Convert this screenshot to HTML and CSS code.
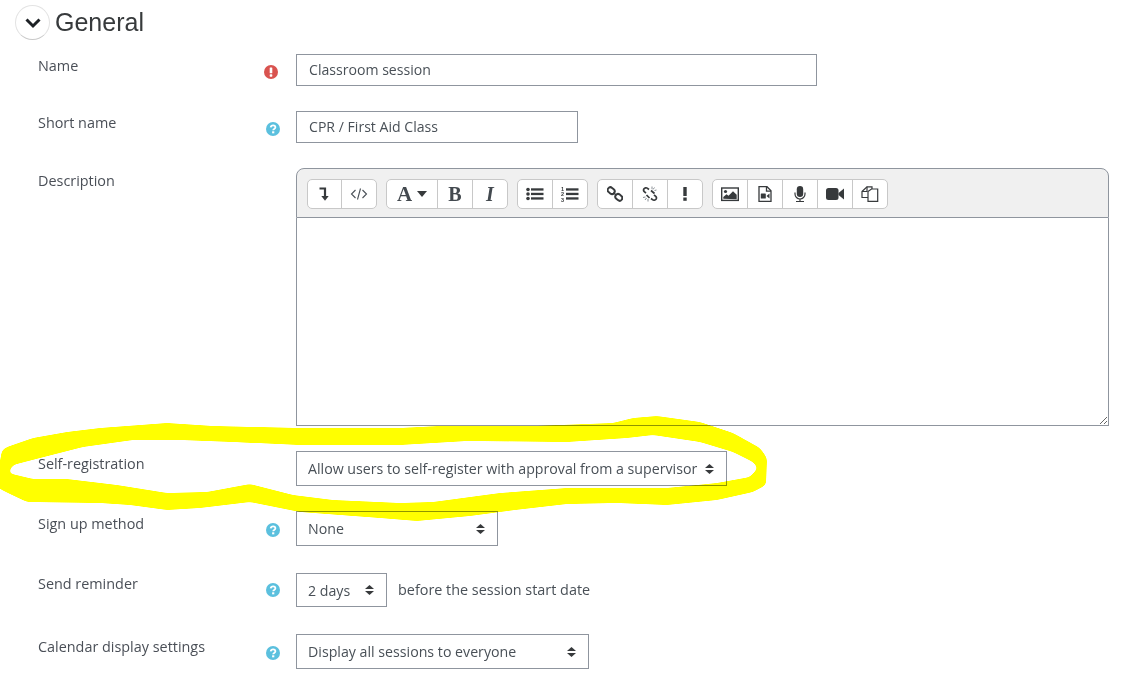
FILE: index.html
```html
<!DOCTYPE html>
<html lang="en">
<head>
<meta charset="utf-8">
<title>General</title>
<link rel="stylesheet" href="styles.css">
</head>
<body>
<main class="page">
  <header class="section-head">
    <span class="collapse-btn">
      <svg width="16" height="16" viewBox="0 0 16 16"><path d="M1.500 4.500 8 11l6.500-6.500" fill="none" stroke="#1d2125" stroke-width="3"/></svg>
    </span>
    <h2 class="section-title">General</h2>
  </header>

  <div class="row">
    <div class="label label-first">Name</div>
    <div class="icon-col">
      <svg class="help help-error" width="14" height="14" viewBox="0 0 14 14"><circle cx="7" cy="7" r="7" fill="#d9534f"/><rect x="5.700" y="2.500" width="2.600" height="5.800" rx=".6" fill="#fff"/><rect x="5.700" y="9.300" width="2.600" height="2.400" rx=".6" fill="#fff"/></svg>
    </div>
    <input class="input input-name" type="text" value="Classroom session">
  </div>

  <div class="row">
    <div class="label label-first">Short name</div>
    <div class="icon-col">
      <svg class="help" width="14" height="14" viewBox="0 0 14 14"><circle cx="7" cy="7" r="7" fill="#5bc0de"/><path d="M4.700 5.300C4.900 4 5.900 3.300 7.100 3.300c1.300 0 2.300.8 2.300 2 0 1.800-2.200 1.600-2.200 3" fill="none" stroke="#fff" stroke-width="1.800"/><rect x="6.100" y="9.300" width="2.200" height="2" fill="#fff"/></svg>
    </div>
    <input class="input input-short" type="text" value="CPR / First Aid Class">
  </div>

  <div class="row">
    <div class="label">Description</div>
    <div class="icon-col"></div>
    <div class="editor">
      <div class="toolbar">
        <div class="btn-group">
          <span class="tool tool-narrow"><svg width="16" height="16" viewBox="0 0 16 16"><path d="M2.500 2.500H8V12" fill="none" stroke="#373a3c" stroke-width="2.200"/><path d="M4.300 10h7.400L8 14.800z" fill="#373a3c"/></svg></span>
          <span class="tool"><svg width="18" height="16" viewBox="0 0 18 16"><path d="M5.500 4 1.500 8l4 4M12.500 4l4 4-4 4M10.500 2.500 7.500 13.500" fill="none" stroke="#495057" stroke-width="1.100"/></svg></span>
        </div>
        <div class="btn-group">
          <span class="tool tool-wide"><span class="glyph glyph-a">A</span><svg width="10" height="6" viewBox="0 0 10 6"><path d="M0 0h10L5 6z" fill="#373a3c"/></svg></span>
          <span class="tool"><span class="glyph">B</span></span>
          <span class="tool"><span class="glyph glyph-i">I</span></span>
        </div>
        <div class="btn-group">
          <span class="tool"><svg width="18" height="16" viewBox="0 0 18 16"><g fill="#373a3c"><circle cx="2" cy="3.500" r="1.800"/><circle cx="2" cy="8" r="1.800"/><circle cx="2" cy="12.500" r="1.800"/><rect x="5" y="2.300" width="12.500" height="2.300"/><rect x="5" y="6.800" width="12.500" height="2.300"/><rect x="5" y="11.300" width="12.500" height="2.300"/></g></svg></span>
          <span class="tool"><svg width="18" height="16" viewBox="0 0 18 16"><g fill="#373a3c"><text class="tiny-num" x="0" y="5">1</text><text class="tiny-num" x="0" y="10">2</text><text class="tiny-num" x="0" y="15.500">3</text><rect x="5" y="2.300" width="12.500" height="2.300"/><rect x="5" y="6.800" width="12.500" height="2.300"/><rect x="5" y="11.300" width="12.500" height="2.300"/></g></svg></span>
        </div>
        <div class="btn-group">
          <span class="tool"><svg width="16" height="16" viewBox="0 0 16 16"><g fill="none" stroke="#373a3c" stroke-width="1.900"><rect x="-3.500" y="-2.700" width="7.500" height="5.400" rx="2.700" transform="translate(4 4.500) rotate(40)"/><rect x="-4" y="-2.700" width="7.500" height="5.400" rx="2.700" transform="translate(12 11.500) rotate(40)"/><path d="M6.500 6.500 9.500 9.500" stroke-width="1.500"/></g></svg></span>
          <span class="tool"><svg width="16" height="16" viewBox="0 0 16 16"><g fill="none" stroke="#373a3c" stroke-width="1.700"><path d="M7 3.500 5.500 2.300C4.300 1.300 2.800 1.800 2 2.800 1.300 3.900 1.500 5 2.500 5.800L4 7"/><path d="M9 12.500l1.500 1.200c1.200 1 2.700.5 3.500-.5.700-1.100.5-2.200-.5-3L12 9"/><path d="M9 4.500l3.500 3M4.500 9l3 3"/></g><g stroke="#6a7178" stroke-width=".8"><path d="M10 .5v2.500M12.500 1.500 11 3.500M14.500 4l-2 .5M1 11.500l2.500-.5M3 14l1.500-2M6 15.500V13"/></g></svg></span>
          <span class="tool"><svg width="16" height="16" viewBox="0 0 16 16"><g fill="#373a3c"><rect x="6.300" y="1" width="3.400" height="9"/><rect x="6.300" y="11.500" width="3.400" height="3.300"/></g></svg></span>
        </div>
        <div class="btn-group">
          <span class="tool"><svg width="18" height="16" viewBox="0 0 18 16"><rect x=".7" y="2" width="16.600" height="12.400" fill="#fff" stroke="#373a3c" stroke-width="1.400"/><circle cx="4.500" cy="5.500" r="1.600" fill="#373a3c"/><path d="M2.300 12.800V11l3.200-2.700 2 1.500 4.500-4.500 3.700 3.500v4.500z" fill="#373a3c"/></svg></span>
          <span class="tool"><svg width="16" height="16" viewBox="0 0 16 16"><path d="M2 .7h8l4 4v10.600H2z" fill="#fff" stroke="#373a3c" stroke-width="1.300"/><path d="M9.500.7v4.500h4.500" fill="none" stroke="#373a3c" stroke-width="1.300"/><rect x="3.800" y="7.500" width="5" height="5" rx=".6" fill="#373a3c"/><path d="M9.500 10 12.500 7.500v5z" fill="#373a3c"/></svg></span>
          <span class="tool"><svg width="16" height="16" viewBox="0 0 16 16"><rect x="4.800" y="0" width="6.400" height="11" rx="3.200" fill="#373a3c"/><path d="M3 6.500v1.500a5 5 0 0 0 10 0V6.500M8 13v2.300M4 15.500h8" fill="none" stroke="#373a3c" stroke-width="1.200"/></svg></span>
          <span class="tool"><svg width="18" height="16" viewBox="0 0 18 16"><rect x="0" y="2" width="12.500" height="12" rx="2.500" fill="#373a3c"/><path d="M12.500 7 18 2.500v11L12.500 9z" fill="#373a3c"/></svg></span>
          <span class="tool"><svg width="18" height="16" viewBox="0 0 18 16"><g fill="#fff" stroke="#373a3c" stroke-width="1.200"><path d="M1 5.500 6 .8h5v10.700H1z"/><path d="M6 .8v4.700H1" fill="none"/><path d="M7 5.500 10.500 3h6.200v12.300H7z"/></g></svg></span>
        </div>
      </div>
      <textarea class="editor-area"></textarea>
    </div>
  </div>

  <div class="row">
    <div class="label">Self-registration</div>
    <div class="icon-col"></div>
    <select class="select select-self"><option>Allow users to self-register with approval from a supervisor</option></select>
  </div>

  <div class="row row-tall">
    <div class="label">Sign up method</div>
    <div class="icon-col">
      <svg class="help help-low" width="14" height="14" viewBox="0 0 14 14"><circle cx="7" cy="7" r="7" fill="#5bc0de"/><path d="M4.700 5.300C4.900 4 5.900 3.300 7.100 3.300c1.300 0 2.300.8 2.300 2 0 1.800-2.200 1.600-2.200 3" fill="none" stroke="#fff" stroke-width="1.800"/><rect x="6.100" y="9.300" width="2.200" height="2" fill="#fff"/></svg>
    </div>
    <select class="select select-signup"><option>None</option></select>
  </div>

  <div class="row row-tall">
    <div class="label label-high">Send reminder</div>
    <div class="icon-col">
      <svg class="help help-high" width="14" height="14" viewBox="0 0 14 14"><circle cx="7" cy="7" r="7" fill="#5bc0de"/><path d="M4.700 5.300C4.900 4 5.900 3.300 7.100 3.300c1.300 0 2.300.8 2.300 2 0 1.800-2.200 1.600-2.200 3" fill="none" stroke="#fff" stroke-width="1.800"/><rect x="6.100" y="9.300" width="2.200" height="2" fill="#fff"/></svg>
    </div>
    <select class="select select-days"><option>2 days</option></select>
    <span class="after-text">before the session start date</span>
  </div>

  <div class="row">
    <div class="label">Calendar display settings</div>
    <div class="icon-col">
      <svg class="help help-low" width="14" height="14" viewBox="0 0 14 14"><circle cx="7" cy="7" r="7" fill="#5bc0de"/><path d="M4.700 5.300C4.900 4 5.900 3.300 7.100 3.300c1.300 0 2.300.8 2.300 2 0 1.800-2.200 1.600-2.200 3" fill="none" stroke="#fff" stroke-width="1.800"/><rect x="6.100" y="9.300" width="2.200" height="2" fill="#fff"/></svg>
    </div>
    <select class="select select-calendar"><option>Display all sessions to everyone</option></select>
  </div>
</main>

<svg class="scribble" width="1121" height="689" viewBox="0 0 1121 689" aria-hidden="true">
  <defs>
    <filter id="marker" x="-5%" y="-20%" width="110%" height="140%" color-interpolation-filters="sRGB">
      <feGaussianBlur stdDeviation="2.500"/>
      <feComponentTransfer><feFuncA type="linear" slope="10" intercept="-4.500"/></feComponentTransfer>
    </filter>
  </defs>
  <path filter="url(#marker)" fill="#ffff00" d="M-2 472 L2 450 L7 447 L33 438 L67 432 L100 428 L167 423 L213 426 L300 428 L400 428 L440 426 L533 426 L613 423 L633 418 L657 416 L700 422 L733 433 L760 448 L767 458 L766 485 L753 492 L717 500 L667 505 L617 503 L567 504 L515 510 L470 516 L417 521 L380 518 L340 515 L300 512 L270 506 L250 502 L225 505 L200 508 L167 510 L130 505 L100 503 L27 502 L10 494 L-2 488 Z M8 473 L33 479 L67 479 L117 485 L167 493 L207 492 L250 484 L293 495 L333 500 L400 503 L433 502 L500 493 L567 488 L667 488 L717 483 L750 477 L758 468 L753 462 L733 452 L700 442 L653 435 L627 438 L567 442 L467 441 L400 445 L300 445 L233 442 L180 440 L133 440 L83 447 L40 458 L13 465 Z"/>
</svg>
</body>
</html>
```

FILE: styles.css
```css
* {
  box-sizing: border-box;
}

html,
body {
  margin: 0;
  background: #fff;
}

body {
  position: relative;
  height: 689px;
  overflow: hidden;
  font-family: "Open Sans", "Liberation Sans", sans-serif;
  font-size: 14.400px;
  line-height: 21px;
  color: #495057;
}

.page {
  display: flex;
  flex-direction: column;
  gap: 25px;
  width: 1121px;
}

.section-head {
  display: flex;
  align-items: center;
  gap: 5px;
  height: 34px;
  margin-top: 5px;
  margin-bottom: -10px;
  padding-left: 15px;
}

.collapse-btn {
  display: flex;
  flex: none;
  align-items: center;
  justify-content: center;
  width: 35px;
  height: 35px;
  padding-top: 2px;
  border: 1px solid #e3e3e3;
  border-bottom-color: #c9c9c9;
  border-radius: 50%;
  background: #fff;
}

.section-title {
  margin: 0;
  font-family: "Liberation Sans", Arial, sans-serif;
  font-size: 25px;
  font-weight: 400;
  line-height: 34px;
  color: #373a3c;
}

.row {
  display: flex;
  align-items: flex-start;
  padding-left: 38px;
}

.row-tall {
  margin-bottom: 2px;
}

.label {
  flex: none;
  width: 226px;
  padding-top: 2px;
  color: #4a4f57;
}

.label-first {
  padding-top: 1px;
}

.label-high {
  padding-top: 0;
}

.icon-col {
  flex: none;
  width: 32px;
  height: 14px;
}

.help {
  display: block;
  margin: 11px 0 0 2px;
}

.help-error {
  margin-left: 0;
}

.help-low {
  margin-top: 12px;
}

.help-high {
  margin-top: 10px;
}

.input,
.select {
  border: 1px solid #8f959e;
  border-radius: 0;
  background-color: #fff;
  font: inherit;
  color: #495057;
  outline: none;
}

.input {
  height: 32px;
  padding: 0 12px 2px;
  font-size: 14.100px;
}

.input-name {
  width: 521px;
}

.input-short {
  width: 282px;
}

.select {
  height: 35px;
  padding: 0 24px 0 11px;
  font-size: 14.200px;
  appearance: none;
  -webkit-appearance: none;
  background-image: url("data:image/svg+xml,%3Csvg xmlns='http://www.w3.org/2000/svg' width='9' height='10'%3E%3Cpath d='M0 4 4.500 0 9 4zM0 6h9l-4.500 4z' fill='%23373a3c'/%3E%3C/svg%3E");
  background-repeat: no-repeat;
  background-position: right 12px center;
}

.select-self {
  width: 431px;
}

.select-signup {
  width: 202px;
}

.select-days {
  width: 91px;
  height: 34px;
}

.select-calendar {
  width: 293px;
}

.after-text {
  margin-left: 11px;
  padding-top: 6px;
}

.editor {
  display: flex;
  flex-direction: column;
  width: 813px;
  height: 258px;
}

.toolbar {
  display: flex;
  flex: none;
  gap: 9px;
  height: 50px;
  padding: 10px;
  border: 1px solid #8f959e;
  border-radius: 8px 8px 0 0;
  background: #f0f0f0;
}

.btn-group {
  display: flex;
  height: 30px;
  border: 1px solid #c8c8c8;
  border-radius: 5px;
  background: #fff;
}

.tool {
  display: flex;
  align-items: center;
  justify-content: center;
  gap: 5px;
  width: 35px;
  border-left: 1px solid #c8c8c8;
}

.tool:first-child {
  width: 34px;
  border-left: 0;
}

.tool.tool-narrow {
  width: 33px;
}

.tool.tool-wide {
  width: 50px;
}

.glyph {
  font-family: "Liberation Serif", "Times New Roman", serif;
  font-size: 20px;
  font-weight: 700;
  color: #43494f;
}

.glyph-a {
  font-size: 21px;
}

.glyph-i {
  font-style: italic;
}

.tiny-num {
  font-family: "Liberation Sans", Arial, sans-serif;
  font-size: 5.500px;
  font-weight: 700;
}

.editor-area {
  display: block;
  flex: 1;
  width: 100%;
  margin: 0;
  padding: 8px;
  border: 1px solid #8f959e;
  border-top: 0;
  border-radius: 0;
  background: #fff;
  outline: none;
  resize: vertical;
}

.scribble {
  position: absolute;
  top: 0;
  left: 0;
  mix-blend-mode: multiply;
  pointer-events: none;
}
```
